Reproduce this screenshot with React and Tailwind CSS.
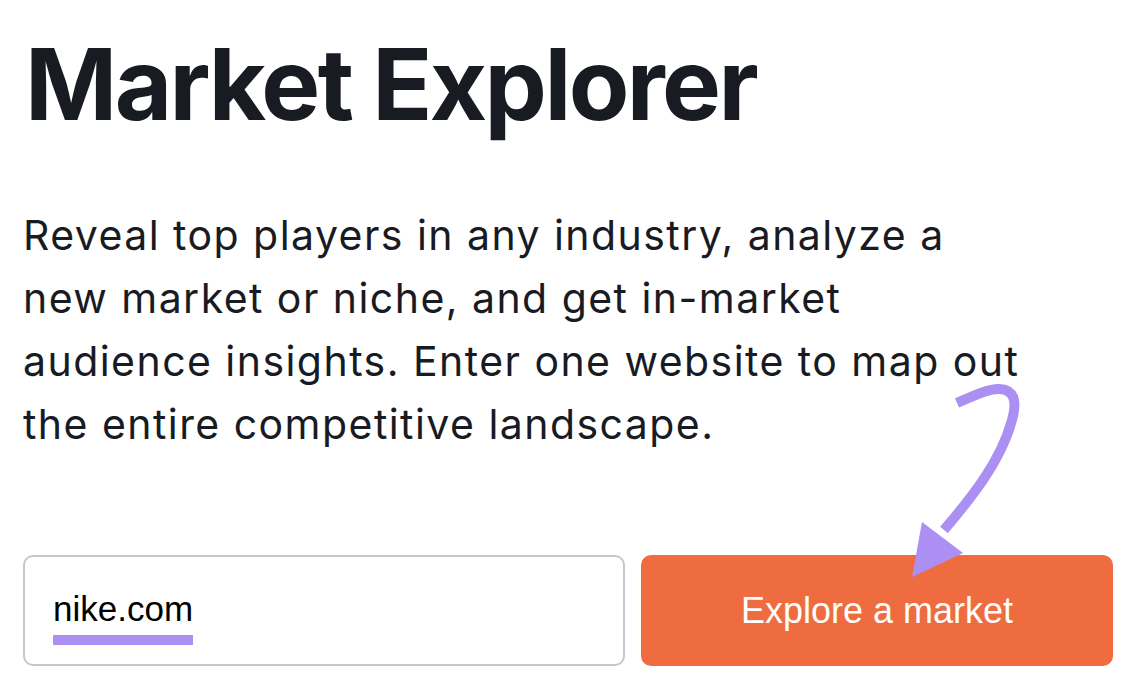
import React from "react";

function Arrow() {
  return (
    <svg className="absolute left-0 top-0 pointer-events-none" width="1130" height="686" viewBox="0 0 1130 686">
      <path
        d="M957 403 C975 395 990 388 1000 389 C1015 390 1017 402 1012 420 C1000 465 965 505 944 530"
        fill="none"
        stroke="#ab8ff3"
        strokeWidth="10"
      />
      <polygon points="922,522 963,553 912,577" fill="#ab8ff3" />
    </svg>
  );
}

export default function App() {
  return (
    <div className="relative w-[1130px] h-[686px] bg-white overflow-hidden text-[#191b23]">
      <div className="flex flex-col pl-[23px] pt-[24px]">
        <h1 className="font-['Inter',sans-serif] font-bold text-[99px] leading-[120px] tracking-[-2.6px] ml-[2px]">
          Market Explorer
        </h1>
        <p className="mt-[60px] w-[1080px] font-['Inter',sans-serif] text-[41px] leading-[63px] tracking-[1.45px]">
          Reveal top players in any industry, analyze a<br />
          new market or niche, and get in-market<br />
          audience insights. Enter one website to map out<br />
          the entire competitive landscape.
        </p>
        <div className="mt-[99px] flex gap-[16px] font-['Liberation_Sans',Arial,sans-serif]">
          <div className="w-[602px] h-[111px] rounded-[10px] border-2 border-[#c4c7cf] flex flex-col justify-center pl-[28px] pt-[12px]">
            <span className="text-[35px] leading-[40px] text-black">nike.com</span>
            <div className="mt-[6px] w-[140px] h-[10px] bg-[#ab8ff3]" />
          </div>
          <button className="w-[472px] h-[111px] rounded-[10px] bg-[#ee6c40] text-white text-[36px]">
            Explore a market
          </button>
        </div>
      </div>
      <Arrow />
    </div>
  );
}
